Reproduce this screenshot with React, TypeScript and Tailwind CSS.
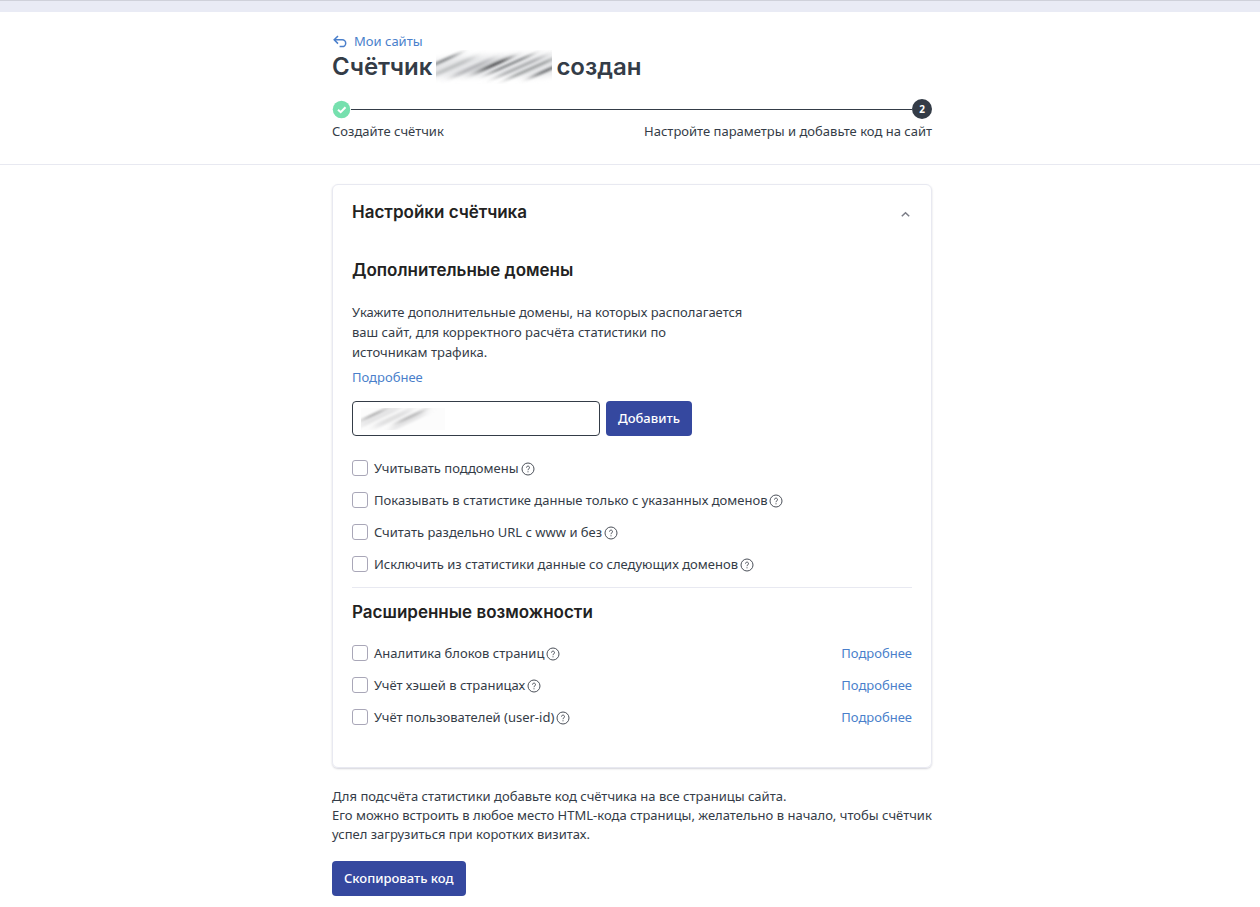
import React, { useState } from 'react';

interface Option {
  id: string;
  label: string;
}

const DOMAIN_OPTIONS: Option[] = [
  { id: 'subdomains', label: 'Учитывать поддомены' },
  { id: 'only-listed', label: 'Показывать в статистике данные только с указанных доменов' },
  { id: 'www', label: 'Считать раздельно URL с www и без' },
  { id: 'exclude', label: 'Исключить из статистики данные со следующих доменов' },
];

const EXTRA_OPTIONS: Option[] = [
  { id: 'blocks', label: 'Аналитика блоков страниц' },
  { id: 'hashes', label: 'Учёт хэшей в страницах' },
  { id: 'user-id', label: 'Учёт пользователей (user-id)' },
];

const BackIcon: React.FC = () => (
  <svg className="h-4 w-4" viewBox="0 0 16 16" fill="none" stroke="currentColor" strokeWidth="1.5">
    <path d="M6 2 2.2 5.8 6 9.6M2.4 5.8h7.9a3.4 3.4 0 0 1 0 6.8H7.6" />
  </svg>
);

const HelpIcon: React.FC = () => (
  <svg className="h-3.5 w-3.5" viewBox="0 0 14 14" fill="none" stroke="currentColor">
    <circle cx="7" cy="7" r="6" strokeWidth="1" />
    <path d="M5.5 5.6a1.5 1.5 0 1 1 2.4 1.2c-.6.4-.9.7-.9 1.4" strokeWidth="1" />
    <path d="M7 9.3v1" strokeWidth="1" />
  </svg>
);

const DoneIcon: React.FC = () => (
  <svg className="h-[19px] w-[19px]" viewBox="0 0 19 19" fill="none">
    <circle cx="9.5" cy="9.5" r="8.75" fill="#76e0ae" />
    <path d="m6 9.7 2.7 2.5 4.8-5" stroke="#fff" strokeWidth="2" />
  </svg>
);

const ChevronIcon: React.FC<{ open: boolean }> = ({ open }) => (
  <svg className={open ? 'h-3 w-3' : 'h-3 w-3 rotate-180'} viewBox="0 0 12 12" fill="none" stroke="currentColor" strokeWidth="1.5">
    <path d="m1.8 8.3 3.7-3.6 3.7 3.6" />
  </svg>
);

// Motion-blurred stand-in for the hidden site name.
// The bars are blurred along x inside a tilted group, so they fade out at both ends.
const TitleSmudge: React.FC = () => (
  <svg className="h-[34px] w-[116px]" viewBox="0 0 116 34" aria-hidden="true">
    <defs>
      <filter id="title-blur" x="-50%" y="-50%" width="200%" height="200%">
        <feGaussianBlur stdDeviation="7 1" />
      </filter>
      <filter id="title-haze" x="-20%" y="-50%" width="140%" height="200%">
        <feGaussianBlur stdDeviation="3" />
      </filter>
    </defs>
    <path d="M-8 12 20 7 56 6 124 4v20l-30 3-34-2-30 1-38 1z" fill="#e3e4e6" filter="url(#title-haze)" />
    <g transform="rotate(-24 58 17)" filter="url(#title-blur)" fill="#77797c">
      <rect x="-2" y="-11" width="32" height="3" opacity=".8" />
      <rect x="-4" y="-2" width="46" height="4" opacity=".3" />
      <rect x="18" y="7" width="40" height="4" opacity=".4" />
      <rect x="38" y="12" width="34" height="5" opacity=".5" />
      <rect x="46" y="14" width="30" height="2" fill="#3c3e41" />
      <rect x="52" y="20" width="44" height="2" />
      <rect x="56" y="26" width="50" height="3" opacity=".5" />
      <rect x="66" y="32" width="50" height="3" opacity=".6" />
      <rect x="90" y="40" width="30" height="3" />
    </g>
  </svg>
);

const InputSmudge: React.FC = () => (
  <svg className="h-[22px] w-[84px]" viewBox="0 0 84 22" aria-hidden="true">
    <defs>
      <filter id="input-blur" x="-50%" y="-50%" width="200%" height="200%">
        <feGaussianBlur stdDeviation="6 1" />
      </filter>
    </defs>
    <path d="M0 0h84v22H0z" fill="#fcfcfc" />
    <g transform="rotate(-25 36 11)" filter="url(#input-blur)" fill="#8d8d8f">
      <rect x="4" y="-4" width="26" height="2" opacity=".8" />
      <rect x="0" y="-2" width="44" height="6" opacity=".2" />
      <rect x="14" y="6" width="38" height="5" opacity=".25" />
      <rect x="34" y="13" width="30" height="3" opacity=".6" />
      <rect x="26" y="16" width="38" height="4" opacity=".2" />
    </g>
  </svg>
);

const OptionRow: React.FC<{ option: Option; withLink?: boolean }> = ({ option, withLink }) => (
  <li className="flex h-8 items-center justify-between">
    <div className="flex items-center">
      <input
        id={option.id}
        type="checkbox"
        className="mr-1.5 h-4 w-4 appearance-none rounded-[3px] border border-[#a9a7b8] bg-white checked:border-[#35489f] checked:bg-[#35489f]"
      />
      <label htmlFor={option.id}>{option.label}</label>
      <button type="button" aria-label="Справка" className="mt-0.5 ml-0.5 text-[#4b5059]">
        <HelpIcon />
      </button>
    </div>
    {withLink && <a href="#" className="text-[#4a7fcb]">Подробнее</a>}
  </li>
);

export default function App() {
  const [open, setOpen] = useState(true);
  const [domain, setDomain] = useState('');

  return (
    <div className="min-h-screen bg-white font-['Noto_Sans',sans-serif] text-[13px] leading-[19px] text-[#343c47]">
      <div className="h-3 border-t border-[#cfd1da] bg-[#e9ebf5]" />

      <header className="border-b border-[#e8e9f1] pt-5 pb-[23px]">
        <div className="mx-auto max-w-[604px] pl-1">
          <a href="#" className="flex w-fit items-center gap-1.5 text-[#4a7fcb]">
            <BackIcon />
            Мои сайты
          </a>
          <h1 className="flex h-8 items-center gap-1 font-[Inter,sans-serif] text-2xl leading-8 font-semibold">
            Счётчик
            <TitleSmudge />
            создан
          </h1>
          <ol className="mt-4 grid grid-cols-[auto_1fr_auto] items-center gap-y-[3px]">
            <li className="contents">
              <DoneIcon />
              <span className="h-px bg-[#343c47]" />
            </li>
            <li className="flex h-5 w-5 items-center justify-center rounded-full bg-[#343c47] text-[10px] font-bold text-white">2</li>
            <li className="col-span-3 flex justify-between">
              <span>Создайте счётчик</span>
              <span>Настройте параметры и добавьте код на сайт</span>
            </li>
          </ol>
        </div>
      </header>

      <main className="mx-auto max-w-[604px] pt-[19px] pb-3 pl-1">
        <section className="rounded-md border border-[#e8e9f1] px-[19px] pb-[34px] shadow-[0_1px_2px_rgba(40,40,70,0.2)]">
          <div className="flex items-center justify-between pt-[15px]">
            <h2 className="font-[Inter,sans-serif] text-[17px] leading-6 font-semibold text-[#222]">Настройки счётчика</h2>
            <button
              type="button"
              aria-label="Свернуть"
              aria-expanded={open}
              onClick={() => setOpen(!open)}
              className="mt-1 text-[#7b7d87]"
            >
              <ChevronIcon open={open} />
            </button>
          </div>

          {open && (
            <>
              <h3 className="mt-[34px] font-[Inter,sans-serif] text-[17px] leading-6 font-semibold text-[#222]">Дополнительные домены</h3>
              <p className="mt-5 max-w-[392px] leading-5">
                Укажите дополнительные домены, на которых располагается ваш сайт, для корректного расчёта статистики по источникам трафика.
              </p>
              <a href="#" className="mt-1.5 block w-fit text-[#4a7fcb]">Подробнее</a>

              <div className="mt-3.5 flex gap-1.5">
                <div className="relative">
                  <input
                    type="text"
                    aria-label="Дополнительный домен"
                    value={domain}
                    onChange={(e) => setDomain(e.target.value)}
                    className="h-[35px] w-[248px] rounded border border-[#343c47] bg-white px-2 outline-none"
                  />
                  {domain === '' && (
                    <span className="pointer-events-none absolute top-[7px] left-[9px]">
                      <InputSmudge />
                    </span>
                  )}
                </div>
                <button type="button" className="h-[35px] rounded bg-[#35489f] px-3 font-medium text-white">Добавить</button>
              </div>

              <ul className="mt-4 border-b border-[#e8e9f1] pb-[7px]">
                {DOMAIN_OPTIONS.map((option) => <OptionRow key={option.id} option={option} />)}
              </ul>

              <h3 className="mt-3 font-[Inter,sans-serif] text-[17px] leading-6 font-semibold text-[#222]">Расширенные возможности</h3>
              <ul className="mt-[13px]">
                {EXTRA_OPTIONS.map((option) => <OptionRow key={option.id} option={option} withLink />)}
              </ul>
            </>
          )}
        </section>

        <p className="mt-[19px]">
          Для подсчёта статистики добавьте код счётчика на все страницы сайта.
          <br />
          Его можно встроить в любое место HTML-кода страницы, желательно в начало, чтобы счётчик успел загрузиться при коротких визитах.
        </p>
        <button type="button" className="mt-[17px] h-[35px] rounded bg-[#35489f] px-3 font-medium text-white">Скопировать код</button>
      </main>
    </div>
  );
}
